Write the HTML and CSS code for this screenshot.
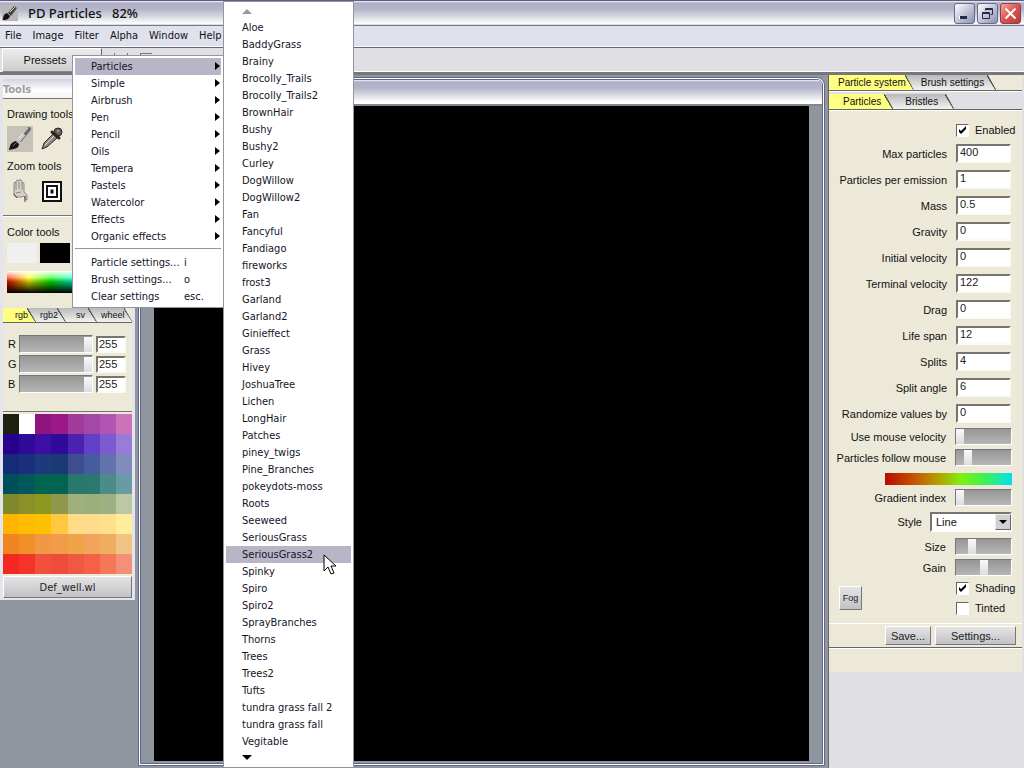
FILE: index.html
```
<!DOCTYPE html>
<html lang="en">
<head>
  <meta charset="UTF-8" />
  <meta name="viewport" content="width=device-width, initial-scale=1.0" />
  <title>PD Particles</title>
  <link rel="stylesheet" href="styles.css">
</head>
<body>
  <header class="titlebar">
    <svg class="app-icon" width="16" height="16" viewBox="0 0 16 16">
      <rect width="16" height="16" fill="#b9b6b6"/>
      <path d="M1 15c0-4 1-6 4-7l3 3c-1 3-3 4-7 4z" fill="#111"/>
      <path d="M6 8l6-7 3 2-6 8z" fill="#444"/>
      <path d="M8 7l5-5" stroke="#ddd" stroke-width="1"/>
    </svg>
    <h1>PD Particles&nbsp;&nbsp; 82%</h1>
    <div class="window-buttons">
      <button class="win-btn" aria-label="Minimize">
        <svg width="19" height="19" viewBox="0 0 19 19"><rect x="4" y="12" width="8" height="3" fill="#fff"/><rect x="5" y="12" width="7" height="3" fill="#222a48"/></svg>
      </button>
      <button class="win-btn" aria-label="Restore">
        <svg width="19" height="19" viewBox="0 0 19 19" fill="none" stroke="#222a48"><path d="M7.500 6.500v-2h7v6h-2M7.500 5.500h7"/><path d="M4.500 8.500h7v6h-7zM4.500 9.500h7"/></svg>
      </button>
      <button class="win-btn close" aria-label="Close">
        <svg width="19" height="19" viewBox="0 0 19 19"><path d="M4.500 4.500l10 10M14.500 4.500l-10 10" stroke="#fff" stroke-width="2"/></svg>
      </button>
    </div>
  </header>

  <nav class="menubar">
    <button>File</button>
    <button>Image</button>
    <button>Filter</button>
    <button>Alpha</button>
    <button>Window</button>
    <button>Help</button>
  </nav>

  <div class="toolbar">
    <button class="presets">Pressets</button>
    <span class="grip"></span>
    <span class="grip"></span>
    <span class="grip wide"></span>
  </div>

  <main class="workspace">
    <aside class="tools">
      <h2>Tools</h2>
      <section class="drawing">
        <h3>Drawing tools</h3>
        <div class="icons">
          <button class="tool active" aria-label="Brush">
            <svg width="26" height="26" viewBox="0 0 26 26">
              <path d="M13 14L22 3" stroke="#666" stroke-width="4" stroke-linecap="round"/>
              <path d="M11 15L17 8" stroke="#c9c9d0" stroke-width="4"/>
              <path d="M12 12L21 2" stroke="#eee" stroke-width="1"/>
              <path d="M2 24c1-5 2-8 7-9l3 3c0 4-4 5-10 6z" fill="#1c1414"/>
              <path d="M6 20l4-4" stroke="#7a6a6a"/>
            </svg>
          </button>
          <button class="tool" aria-label="Color picker">
            <svg width="26" height="26" viewBox="0 0 26 26">
              <path d="M3 23l2-6 9-9 4 4L8 21z" fill="#8d8a86" stroke="#2f2b2b" stroke-width="1"/>
              <path d="M6 19l9-9" stroke="#ddd" stroke-width="1"/>
              <circle cx="19" cy="6" r="4" fill="#6d5f5c" stroke="#2a2424"/>
              <path d="M13 6l7 6" stroke="#2d2424" stroke-width="3" stroke-linecap="round"/>
              <circle cx="19" cy="5" r="1" fill="#b5a8a4"/>
            </svg>
          </button>
          <button class="tool" aria-label="Line">
            <svg width="26" height="26" viewBox="0 0 26 26"><path d="M1 14l6-3" stroke="#444" stroke-width="2"/></svg>
          </button>
        </div>
        <h3>Zoom tools</h3>
        <div class="icons">
          <button class="tool" aria-label="Pan">
            <svg width="26" height="26" viewBox="0 0 26 26" fill="#d6d2cb" stroke="#8b8783" stroke-width="1">
              <path d="M7 14V5q1-2 2 0V3q1-2 3 0V2q2-1 3 1v2q2-1 2 1v8l3 3v5l-2-1-1-3-3 1H9q-3-1-2-5z"/>
              <path d="M9 5v7M12 4v7M15 5v7M9 15l5-1" fill="none"/>
              <path d="M18 18v6M7 16l3 4" stroke="#444"/>
            </svg>
          </button>
          <button class="tool" aria-label="Fit">
            <svg width="26" height="26" viewBox="0 0 26 26" fill="none" stroke="#111">
              <rect x="4" y="4" width="18" height="19" fill="#fff" stroke-width="2"/>
              <rect x="8" y="8" width="10" height="11" stroke-width="2"/>
              <rect x="12" y="12" width="2" height="3" fill="#111"/>
            </svg>
          </button>
        </div>
      </section>
      <section class="color">
        <h3>Color tools</h3>
        <div class="wells">
          <button class="well light" aria-label="Background color"></button>
          <button class="well dark" aria-label="Foreground color"></button>
          <button class="well red" aria-label="Active color"></button>
        </div>
        <div class="spectrum"></div>
      </section>
      <nav class="tabs small">
        <button class="tab on">rgb</button>
        <button class="tab">rgb2</button>
        <button class="tab">sv</button>
        <button class="tab">wheel</button>
      </nav>
      <section class="channels">
        <div class="channel">
          <label for="r">R</label>
          <input type="range" id="r" min="0" max="255" value="255">
          <input type="text" value="255" aria-label="Red value">
        </div>
        <div class="channel">
          <label for="g">G</label>
          <input type="range" id="g" min="0" max="255" value="255">
          <input type="text" value="255" aria-label="Green value">
        </div>
        <div class="channel">
          <label for="b">B</label>
          <input type="range" id="b" min="0" max="255" value="255">
          <input type="text" value="255" aria-label="Blue value">
        </div>
      </section>
      <div class="palette" id="palette"></div>
      <button class="raised palette-file">Def_well.wl</button>
    </aside>

    <section class="document">
      <div class="doc-title"></div>
      <div class="doc-body"><div class="canvas"></div></div>
    </section>

    <aside class="settings">
      <nav class="tabs">
        <button class="tab on">Particle system</button>
        <button class="tab">Brush settings</button>
      </nav>
      <nav class="tabs second">
        <button class="tab on">Particles</button>
        <button class="tab">Bristles</button>
      </nav>
      <form class="form">
        <div class="check enabled"><input type="checkbox" id="enabled" checked><label for="enabled">Enabled</label></div>
        <div class="field"><label for="max">Max particles</label><input type="text" id="max" value="400"></div>
        <div class="field"><label for="per">Particles per emission</label><input type="text" id="per" value="1"></div>
        <div class="field"><label for="mass">Mass</label><input type="text" id="mass" value="0.5"></div>
        <div class="field"><label for="gravity">Gravity</label><input type="text" id="gravity" value="0"></div>
        <div class="field"><label for="initial">Initial velocity</label><input type="text" id="initial" value="0"></div>
        <div class="field"><label for="terminal">Terminal velocity</label><input type="text" id="terminal" value="122"></div>
        <div class="field"><label for="drag">Drag</label><input type="text" id="drag" value="0"></div>
        <div class="field"><label for="life">Life span</label><input type="text" id="life" value="12"></div>
        <div class="field"><label for="splits">Splits</label><input type="text" id="splits" value="4"></div>
        <div class="field"><label for="angle">Split angle</label><input type="text" id="angle" value="6"></div>
        <div class="field"><label for="random">Randomize values by</label><input type="text" id="random" value="0"></div>
        <div class="slide"><label for="usemouse">Use mouse velocity</label><input type="range" id="usemouse" value="0"></div>
        <div class="slide"><label for="follow">Particles follow mouse</label><input type="range" id="follow" value="18"></div>
        <div class="gradient"></div>
        <div class="slide"><label for="gindex">Gradient index</label><input type="range" id="gindex" value="0"></div>
        <div class="style-row">
          <label for="style">Style</label>
          <div class="select">
            <select id="style"><option>Line</option></select>
            <span class="arrow"></span>
          </div>
        </div>
        <div class="slide"><label for="size">Size</label><input type="range" id="size" value="25"></div>
        <div class="slide"><label for="gain">Gain</label><input type="range" id="gain" value="50"></div>
        <div class="bottom">
          <button type="button" class="raised fog">Fog</button>
          <div class="checks">
            <div class="check"><input type="checkbox" id="shading" checked><label for="shading">Shading</label></div>
            <div class="check"><input type="checkbox" id="tinted"><label for="tinted">Tinted</label></div>
          </div>
        </div>
      </form>
      <div class="actions">
        <button class="raised save">Save...</button>
        <button class="raised open">Settings...</button>
      </div>
      <div class="footer"></div>
    </aside>
  </main>

  <ul class="menu filter-menu">
    <li class="sub hover">Particles</li>
    <li class="sub">Simple</li>
    <li class="sub">Airbrush</li>
    <li class="sub">Pen</li>
    <li class="sub">Pencil</li>
    <li class="sub">Oils</li>
    <li class="sub">Tempera</li>
    <li class="sub">Pastels</li>
    <li class="sub">Watercolor</li>
    <li class="sub">Effects</li>
    <li class="sub">Organic effects</li>
    <li class="separator"></li>
    <li>Particle settings... <kbd>i</kbd></li>
    <li>Brush settings... <kbd>o</kbd></li>
    <li>Clear settings <kbd>esc.</kbd></li>
  </ul>

  <ul class="menu particles-menu">
    <li class="scroll up"></li>
    <li>Aloe</li>
    <li>BaddyGrass</li>
    <li>Brainy</li>
    <li>Brocolly_Trails</li>
    <li>Brocolly_Trails2</li>
    <li>BrownHair</li>
    <li>Bushy</li>
    <li>Bushy2</li>
    <li>Curley</li>
    <li>DogWillow</li>
    <li>DogWillow2</li>
    <li>Fan</li>
    <li>Fancyful</li>
    <li>Fandiago</li>
    <li>fireworks</li>
    <li>frost3</li>
    <li>Garland</li>
    <li>Garland2</li>
    <li>Ginieffect</li>
    <li>Grass</li>
    <li>Hivey</li>
    <li>JoshuaTree</li>
    <li>Lichen</li>
    <li>LongHair</li>
    <li>Patches</li>
    <li>piney_twigs</li>
    <li>Pine_Branches</li>
    <li>pokeydots-moss</li>
    <li>Roots</li>
    <li>Seeweed</li>
    <li>SeriousGrass</li>
    <li class="hover">SeriousGrass2
      <svg class="cursor" width="14" height="22" viewBox="0 0 14 22"><path d="M1 1v16l4-4 3 7 3-1-3-7h5z" fill="#fff" stroke="#000"/></svg>
    </li>
    <li>Spinky</li>
    <li>Spiro</li>
    <li>Spiro2</li>
    <li>SprayBranches</li>
    <li>Thorns</li>
    <li>Trees</li>
    <li>Trees2</li>
    <li>Tufts</li>
    <li>tundra grass fall 2</li>
    <li>tundra grass fall</li>
    <li>Vegitable</li>
    <li class="scroll down"></li>
  </ul>

  <script>
    const colors = [
      '#1f2010', '#ffffff', '#8f1480', '#9c1888', '#a23a9c', '#a447a6', '#b154b3', '#cb72b8',
      '#28008c', '#300a98', '#3c0ea4', '#300a98', '#4c20b0', '#6440c8', '#7c5ad0', '#987cd8',
      '#142c78', '#1a307c', '#1c3a7c', '#1a3a74', '#3e4c90', '#465c9c', '#6272ac', '#808cbc',
      '#00505c', '#00585c', '#006450', '#006450', '#28786c', '#2c7870', '#4c8c88', '#689ca4',
      '#80882c', '#8c9028', '#8c9820', '#90984c', '#a0b07c', '#9cae7c', '#9cb084', '#bcc8a4',
      '#ffb400', '#ffbc00', '#ffc000', '#ffc840', '#ffdc88', '#ffdc8c', '#ffe08c', '#ffec9c',
      '#f08420', '#f09028', '#f09844', '#f09c48', '#f0a448', '#f0a45c', '#f0ac60', '#f0c484',
      '#f42820', '#f43428', '#f0503c', '#f04c3c', '#f05844', '#f46048', '#f47858', '#f49078'
    ];
    const palette = document.getElementById('palette');
    colors.forEach((color) => {
      const swatch = document.createElement('span');
      swatch.style.background = color;
      palette.appendChild(swatch);
    });
  </script>
</body>
</html>
```
FILE: styles.css
```
* {
  box-sizing: border-box;
}

body {
  margin: 0;
  height: 100vh;
  display: flex;
  flex-direction: column;
  overflow: hidden;
  position: relative;
  background: #dfdfe4;
  font-family: "Liberation Sans", Arial, sans-serif;
  font-size: 11px;
  color: #111;
}

h1, h2, h3, ul {
  margin: 0;
  padding: 0;
  font-weight: normal;
}

button, input, select {
  font: inherit;
  color: inherit;
  margin: 0;
  padding: 0;
  border: none;
  border-radius: 0;
}

/* window frame */
.titlebar {
  flex: none;
  height: 26px;
  display: flex;
  align-items: center;
  padding: 0 3px 0 2px;
  border-top: 1px solid #62607c;
  border-bottom: 1px solid #76788c;
  background: linear-gradient(#f4f4fa 0, #aeaec6 2px, #b4b4ca 8px, #e4e4ec 18px, #fff 23px, #b8b8c4 24px);
}

.titlebar h1 {
  flex: 1;
  margin-left: 10px;
  font-family: "Noto Sans", sans-serif;
  font-size: 13px;
  font-weight: 500;
}

.window-buttons {
  display: flex;
  gap: 2px;
}

.win-btn {
  width: 21px;
  height: 21px;
  border: 1px solid #666a8c;
  border-radius: 3px;
  background: linear-gradient(135deg, #fff, #c4c6d8 50%, #8b90ae);
}

.win-btn svg {
  display: block;
}

.win-btn.close {
  border-color: #8a4050;
  background: linear-gradient(135deg, #f4a8a0, #dc5450 50%, #b83840);
}

.menubar {
  flex: none;
  height: 21px;
  display: flex;
  gap: 11px;
  padding: 0 5px 2px;
  background: #dfe2ec;
  border-bottom: 1px solid #fff;
  font-family: "DejaVu Sans Condensed", "DejaVu Sans", sans-serif;
}

.menubar button {
  background: none;
}

.toolbar {
  flex: none;
  height: 28px;
  display: flex;
  gap: 12px;
  padding-left: 2px;
  border-top: 1px solid #68686c;
  border-bottom: 3px solid #77777b;
  background: #dfdfe4;
  box-shadow: inset 0 -1px #fff;
}

.presets {
  width: 100px;
  padding-right: 14px;
  border: 1px solid #fff;
  border-right-color: #66666a;
  border-bottom-color: #88888c;
  background: linear-gradient(#ececec, #cdcdcf);
}

.grip {
  align-self: center;
  height: 14px;
  border-left: 1px solid #77777b;
}

.grip.wide {
  width: 12px;
  border-top: 1px solid #77777b;
}

.workspace {
  flex: 1;
  min-height: 0;
  display: flex;
  background: #8f969f;
}

/* shared controls */
.raised {
  border: 1px solid #fff;
  border-right-color: #77777b;
  border-bottom-color: #77777b;
  background: linear-gradient(#e4e4e4, #c2c2c6);
  color: #222;
}

input[type="text"] {
  width: 55px;
  height: 19px;
  padding: 0 2px 2px;
  border: 2px solid #fbfaf4;
  border-top-color: #77746c;
  border-left-color: #77746c;
  background: #fff;
  color: #222;
}

input[type="range"] {
  appearance: none;
  width: 57px;
  height: 17px;
  border: 1px solid #fff;
  border-top-color: #77777b;
  border-left-color: #77777b;
  background: linear-gradient(#969696, #b6b6b6);
}

input[type="range"]::-webkit-slider-thumb {
  appearance: none;
  width: 8px;
  height: 15px;
  background: linear-gradient(#fafafa, #dcdce0);
}

.tabs {
  display: flex;
  height: 16px;
  border-bottom: 1px solid #66666a;
  background: #ece9d8;
}

.tab {
  position: relative;
  margin-right: -8px;
  padding: 0 12px 0 15px;
  background: linear-gradient(#b9b9bd, #f2f2ee);
  font-size: 10px;
  clip-path: polygon(0 0, calc(100% - 8px) 0, 100% 100%, 0 100%);
}

/* slanted right edge */
.tab::after {
  content: "";
  position: absolute;
  right: 0;
  top: 0;
  width: 9px;
  height: 100%;
  background: linear-gradient(to top right, transparent 44%, #55554f 46%, #55554f 54%, transparent 56%);
}

.tab:nth-child(1) {
  z-index: 4;
  padding: 0 8px 0 9px;
}

.tab:nth-child(2) { z-index: 3; }
.tab:nth-child(3) { z-index: 2; }

.tab.on {
  background: #ffff80;
}

/* left panel */
.tools {
  flex: none;
  align-self: flex-start;
  width: 135px;
  display: flex;
  flex-direction: column;
  border: 1px solid #e4e4ec;
  border-width: 4px 3px 2px;
  background: #ece9d8;
}

.tools h2 {
  height: 20px;
  line-height: 22px;
  font-family: "DejaVu Sans Condensed", "DejaVu Sans", sans-serif;
  font-size: 11px;
  font-weight: bold;
  color: #9c9c9c;
  background: linear-gradient(#d2d2e4, #fff 60%, #f4f4f6);
  border-bottom: 1px solid #77777b;
}

.tools h3 {
  font-size: 11px;
  line-height: 14px;
  white-space: nowrap;
  overflow: hidden;
}

.drawing {
  height: 117px;
  padding: 8px 4px 0;
  border-bottom: 1px solid #77777b;
}

.icons {
  display: flex;
  gap: 6px;
  margin: 5px 0 7px;
}

.tool {
  width: 26px;
  height: 26px;
  background: none;
}

.tool svg {
  display: block;
}

.tool.active {
  background: #c6c2b8;
}

.color {
  height: 92px;
  padding: 8px 4px 0;
  border-top: 1px solid #fff;
}

.wells {
  display: flex;
  gap: 3px;
  margin: 4px 0 8px;
}

.well {
  width: 30px;
  height: 20px;
}

.well.light { background: #f0f0f0; }
.well.dark { background: #000; }
.well.red { background: #d02020; }

.spectrum {
  height: 22px;
  background:
    linear-gradient(transparent 30%, #000),
    linear-gradient(#fff, transparent 50%),
    linear-gradient(to right, #f00, #ff0 18%, #0f0 36%, #0ff 58%, #00f 80%, #f0f);
}

.tabs.small {
  height: 15px;
}

.small .tab {
  padding: 0 8px 0 12px;
  font-size: 9px;
}

.small .tab:nth-child(3) {
  padding: 0 12px 0 18px;
}

.small .tab:nth-child(4) {
  margin-right: 0;
}

.channels {
  height: 89px;
  padding: 12px 3px 0;
  display: flex;
  flex-direction: column;
  gap: 2px;
  border-bottom: 1px solid #77777b;
}

.channel {
  display: flex;
  align-items: center;
  height: 18px;
}

.channel label {
  width: 13px;
  padding-left: 2px;
}

.channel input[type="range"] {
  width: 74px;
  height: 18px;
  margin-right: 3px;
}

.channel input[type="text"] {
  width: 30px;
  height: 17px;
  padding: 0 1px;
}

.palette {
  display: grid;
  grid-template-columns: repeat(8, 1fr);
  grid-auto-rows: 20px;
  padding: 2px 0;
}

.palette-file {
  height: 22px;
  font-family: "DejaVu Sans Condensed", "DejaVu Sans", sans-serif;
}

/* document window */
.document {
  flex: 1;
  display: flex;
  flex-direction: column;
  margin: 2px 3px;
  border: 3px double #62668a;
  border-radius: 8px 8px 0 0;
  background: #fff;
  overflow: hidden;
}

.doc-title {
  height: 26px;
  border-bottom: 2px solid #84868f;
  background: linear-gradient(#f4f4fa 0, #aeaec6 2px, #b4b4ca 8px, #e4e4ec 17px, #fff 22px);
}

.doc-body {
  flex: 1;
  display: flex;
  padding: 0 13px 2px;
  background: #8f969f;
}

.canvas {
  flex: 1;
  background: #000;
}

/* right panel */
.settings {
  flex: none;
  width: 196px;
  padding-right: 2px;
  border-left: 1px solid #66666a;
  background: #dfdfe4;
}

.settings .tabs.second {
  height: 19px;
  padding-top: 2px;
  background: #dfdfe4;
  border-top: 1px solid #fff;
}

.second .tab:nth-child(1) {
  padding: 0 12px 0 14px;
}

.second .tab:nth-child(2) {
  padding: 0 16px 0 20px;
}

.form {
  padding: 9px 10px 0 8px;
  background: #ece9d8;
  border-top: 1px solid #fff;
}

.check {
  display: flex;
  align-items: center;
  height: 20px;
}

.check.enabled {
  padding-left: 119px;
}

.check input {
  appearance: none;
  flex: none;
  width: 13px;
  height: 13px;
  margin-right: 6px;
  border: 1px solid #fff;
  border-top-color: #66645c;
  border-left-color: #66645c;
  background: #fff;
}

.check input:checked {
  background: #fff url("data:image/svg+xml,%3Csvg xmlns='http://www.w3.org/2000/svg' viewBox='0 0 11 11'%3E%3Cpath d='M2 4v3l2 2 5-5V1L4 6z'/%3E%3C/svg%3E") center / 11px;
}

.form label {
  white-space: nowrap;
}

.field,
.slide {
  display: flex;
  align-items: center;
  justify-content: flex-end;
  gap: 9px;
}

.field {
  height: 26px;
  padding-right: 1px;
}

.slide {
  height: 21px;
}

.field label {
  padding-top: 2px;
}

.gradient {
  height: 12px;
  margin: 5px 0 2px 48px;
  background: linear-gradient(to right, #b40c00, #c84800 20%, #b4a000 42%, #80f010 60%, #40f050 78%, #10e8c0 93%, #00e0e8);
}

.style-row {
  display: flex;
  align-items: center;
  justify-content: flex-end;
  gap: 8px;
  height: 28px;
}

.select {
  position: relative;
  width: 82px;
}

.select select {
  display: block;
  appearance: none;
  width: 100%;
  height: 20px;
  padding-left: 4px;
  border: 2px solid #fff;
  border-top-color: #77746c;
  border-left-color: #77746c;
  background: #fff;
}

.arrow {
  position: absolute;
  top: 2px;
  right: 1px;
  width: 16px;
  height: 16px;
  border: 1px solid #eee;
  border-right-color: #66666a;
  border-bottom-color: #66666a;
  background: #d0d0d4;
  pointer-events: none;
}

.arrow::after {
  content: "";
  position: absolute;
  left: 3px;
  top: 5px;
  border: 4px solid transparent;
  border-top-color: #000;
}

.bottom {
  display: flex;
  align-items: center;
  height: 45px;
  padding: 0 0 5px 2px;
}

.checks {
  margin-left: 94px;
}

.fog {
  flex: none;
  width: 23px;
  height: 24px;
  font-size: 9px;
}

.actions {
  display: flex;
  justify-content: flex-end;
  gap: 4px;
  height: 25px;
  padding: 2px 6px 2px 0;
  border-top: 1px solid #fff;
  border-bottom: 1px solid #66666a;
  background: #ece9d8;
}

.save { width: 46px; }
.open { width: 81px; }

.footer {
  height: 24px;
  border-top: 1px solid #fff;
  background: #ece9d8;
}

/* popup menus */
.menu {
  position: absolute;
  padding: 2px;
  border: 1px solid #94949c;
  background: #fff;
  list-style: none;
  font-family: "DejaVu Sans Condensed", "DejaVu Sans", sans-serif;
  color: #141428;
}

.menu li {
  position: relative;
  height: 17px;
  padding-left: 16px;
  line-height: 18px;
  white-space: nowrap;
}

.menu .hover {
  background: #b8b5c6;
}

.filter-menu {
  left: 72px;
  top: 55px;
  width: 152px;
}

.sub::after {
  content: "";
  position: absolute;
  right: 1px;
  top: 4px;
  border: 4px solid transparent;
  border-left: 5px solid #000;
  border-right: none;
}

.menu .separator {
  height: 1px;
  margin: 3px 0 5px;
  padding: 0;
  background: #94949c;
}

.menu kbd {
  position: absolute;
  left: 109px;
  font: inherit;
  line-height: 18px;
}

.particles-menu {
  left: 223px;
  top: 1px;
  bottom: 0;
  width: 131px;
}

.menu .scroll {
  height: 15px;
}

.scroll::after {
  content: "";
  position: absolute;
  left: 16px;
  top: 5px;
  border: 5px solid transparent;
}

.scroll.up::after {
  border-top: none;
  border-bottom-color: #9a9a9a;
}

.scroll.down::after {
  border-bottom: none;
  border-top-color: #000;
}

.cursor {
  position: absolute;
  left: 97px;
  top: 8px;
  z-index: 1;
}
```
